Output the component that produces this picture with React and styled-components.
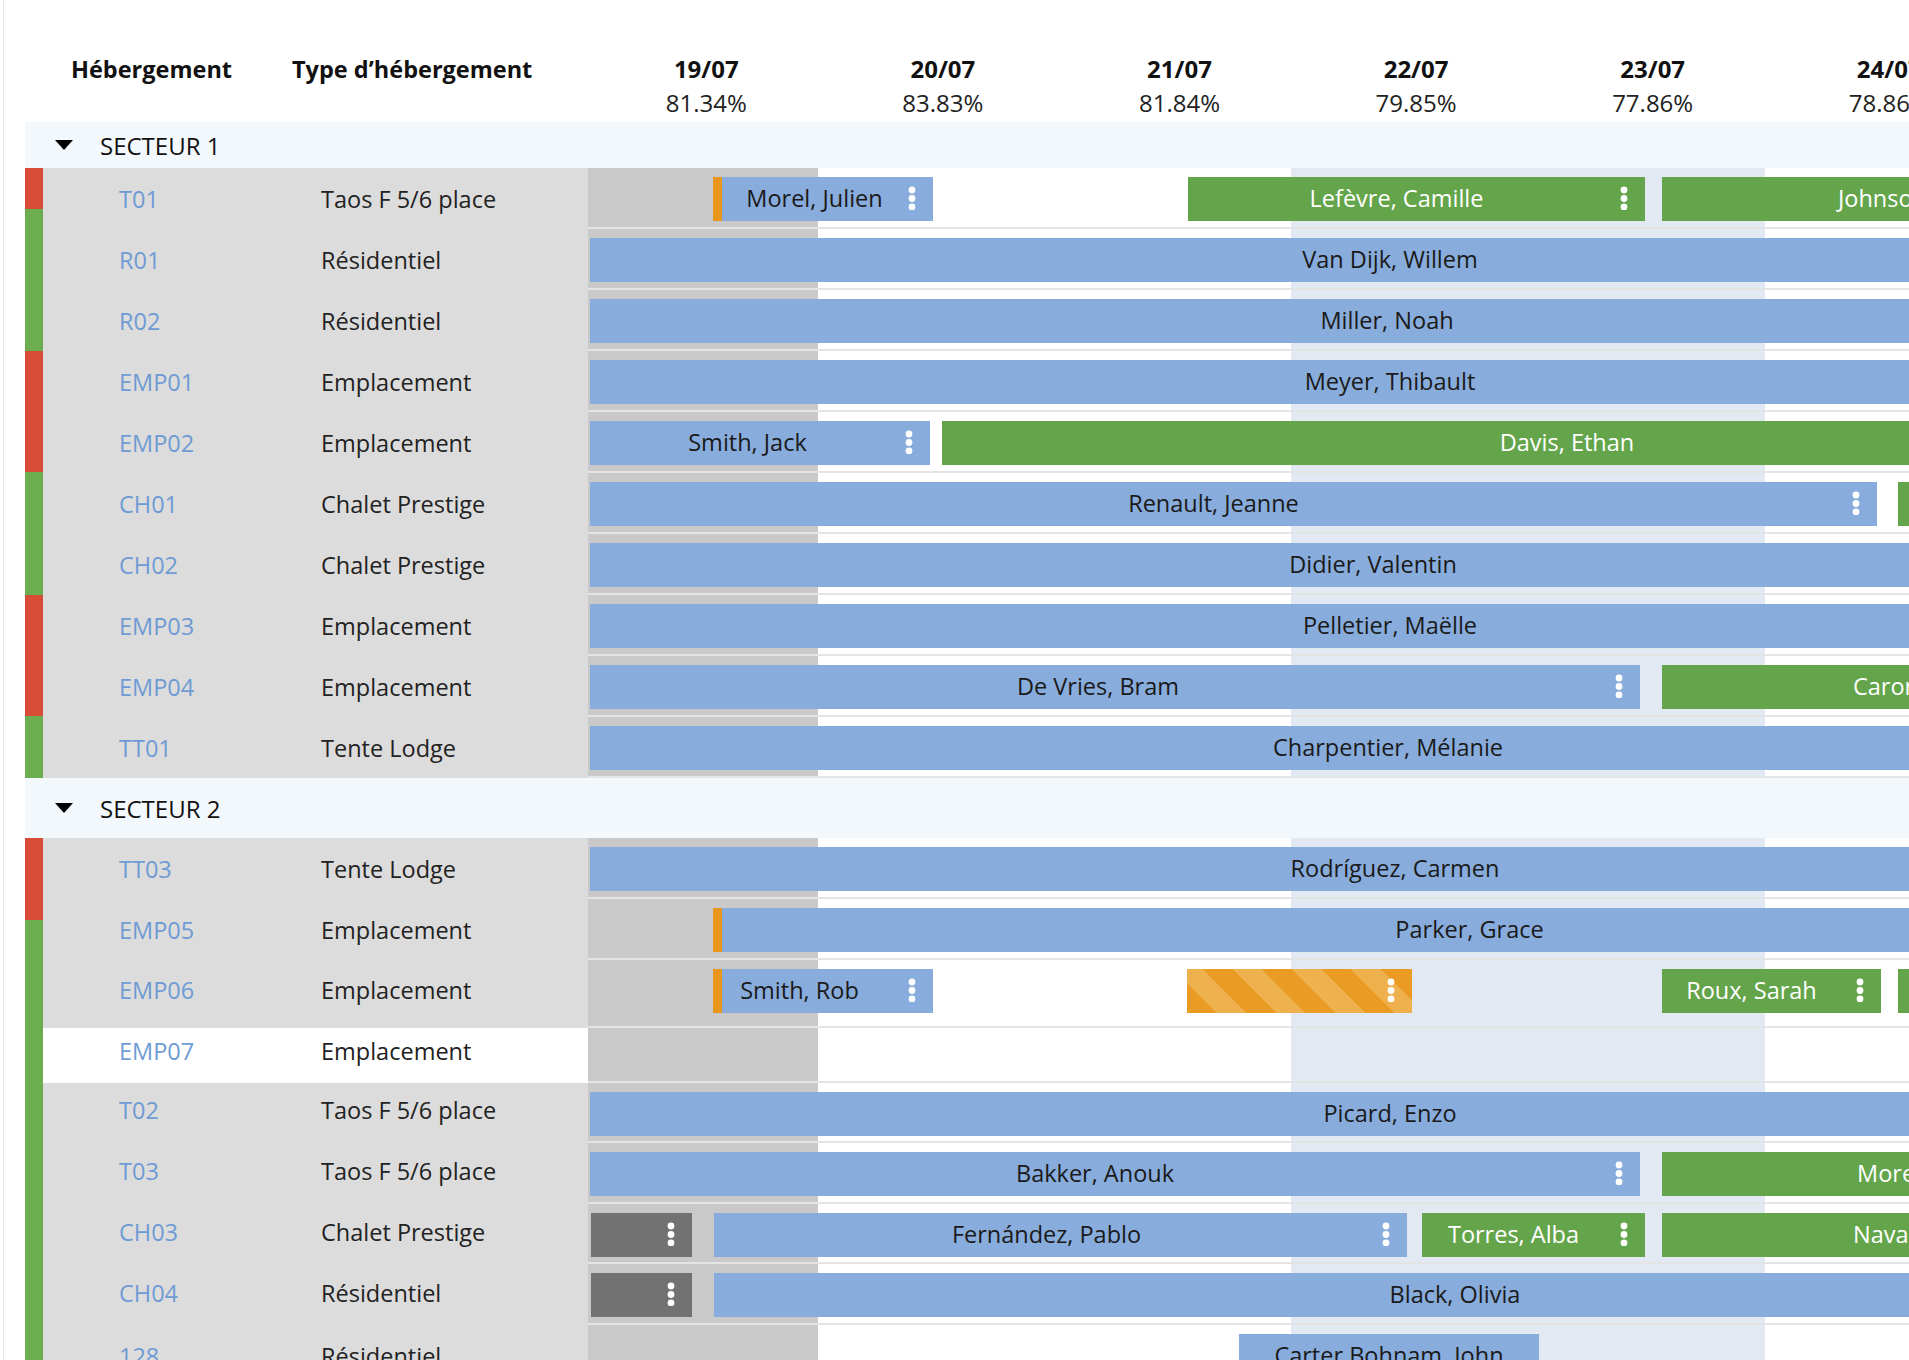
import React from 'react'
import styled, {createGlobalStyle, css} from 'styled-components'

const GlobalStyle = createGlobalStyle`
    html, body {
        margin: 0;
        padding: 0;
        overflow: hidden;
        background: #fff;
    }
    body {
        font-family: "Open Sans", "Liberation Sans", sans-serif;
        color: #1c1c1c;
    }
`

const DAYS = [
    {date: '19/07', rate: '81.34%'},
    {date: '20/07', rate: '83.83%'},
    {date: '21/07', rate: '81.84%'},
    {date: '22/07', rate: '79.85%'},
    {date: '23/07', rate: '77.86%'},
    {date: '24/07', rate: '78.86%'},
]

// bar positions are in px from the start of the timeline
const SECTIONS = [
    {
        name: 'SECTEUR 1',
        height: 46,
        strip: [
            ['red', 41],
            ['green', 142],
            ['red', 121],
            ['green', 123],
            ['red', 121],
            ['green', 62],
        ],
        rows: [
            {
                code: 'T01',
                type: 'Taos F 5/6 place',
                bars: [
                    {x: 125, w: 220, kind: 'blue', edge: true, label: 'Morel, Julien', menu: true, menuW: 26},
                    {x: 600, w: 457, kind: 'green', label: 'Lefèvre, Camille', menu: true},
                    {x: 1074, w: 400, kind: 'green', label: 'Johnson, Emma', pad: 176},
                ],
            },
            {code: 'R01', type: 'Résidentiel', bars: [{x: 2, w: 1600, kind: 'blue', label: 'Van Dijk, Willem'}]},
            {code: 'R02', type: 'Résidentiel', bars: [{x: 2, w: 1594, kind: 'blue', label: 'Miller, Noah'}]},
            {code: 'EMP01', type: 'Emplacement', bars: [{x: 2, w: 1600, kind: 'blue', label: 'Meyer, Thibault'}]},
            {
                code: 'EMP02',
                type: 'Emplacement',
                bars: [
                    {x: 2, w: 340, kind: 'blue', label: 'Smith, Jack', menu: true, menuW: 22},
                    {x: 354, w: 1250, kind: 'green', label: 'Davis, Ethan'},
                ],
            },
            {
                code: 'CH01',
                type: 'Chalet Prestige',
                bars: [
                    {x: 2, w: 1287, kind: 'blue', label: 'Renault, Jeanne', menu: true},
                    {x: 1310, w: 200, kind: 'green', label: ''},
                ],
            },
            {code: 'CH02', type: 'Chalet Prestige', bars: [{x: 2, w: 1566, kind: 'blue', label: 'Didier, Valentin'}]},
            {code: 'EMP03', type: 'Emplacement', bars: [{x: 2, w: 1600, kind: 'blue', label: 'Pelletier, Maëlle'}]},
            {
                code: 'EMP04',
                type: 'Emplacement',
                bars: [
                    {x: 2, w: 1050, kind: 'blue', label: 'De Vries, Bram', menu: true, menuW: 34},
                    {x: 1074, w: 400, kind: 'green', label: 'Caron, Louis', pad: 191},
                ],
            },
            {code: 'TT01', type: 'Tente Lodge', bars: [{x: 2, w: 1596, kind: 'blue', label: 'Charpentier, Mélanie'}]},
        ],
    },
    {
        name: 'SECTEUR 2',
        height: 60,
        strip: [
            ['red', 82],
            ['green', 600],
        ],
        rows: [
            {code: 'TT03', type: 'Tente Lodge', bars: [{x: 2, w: 1610, kind: 'blue', label: 'Rodríguez, Carmen'}]},
            {
                code: 'EMP05',
                type: 'Emplacement',
                bars: [{x: 125, w: 1504, kind: 'blue', edge: true, label: 'Parker, Grace'}],
            },
            {
                code: 'EMP06',
                type: 'Emplacement',
                height: 68,
                lift: 8,
                bars: [
                    {x: 125, w: 220, kind: 'blue', edge: true, label: 'Smith, Rob', menu: true, menuW: 56},
                    {x: 599, w: 225, kind: 'stripe', label: '', menu: true},
                    {x: 1074, w: 219, kind: 'green', label: 'Roux, Sarah', menu: true},
                    {x: 1310, w: 200, kind: 'green', label: ''},
                ],
            },
            {code: 'EMP07', type: 'Emplacement', height: 55, lift: 10, free: true, bars: []},
            {code: 'T02', type: 'Taos F 5/6 place', height: 60, lift: 6, bars: [{x: 2, w: 1600, kind: 'blue', label: 'Picard, Enzo'}]},
            {
                code: 'T03',
                type: 'Taos F 5/6 place',
                lift: 6,
                bars: [
                    {x: 2, w: 1050, kind: 'blue', label: 'Bakker, Anouk', menu: true},
                    {x: 1074, w: 400, kind: 'green', label: 'Moreau, Hugo', pad: 195},
                ],
            },
            {
                code: 'CH03',
                type: 'Chalet Prestige',
                height: 60,
                lift: 5,
                bars: [
                    {x: 3, w: 101, kind: 'dark', label: '', menu: true},
                    {x: 126, w: 693, kind: 'blue', label: 'Fernández, Pablo', menu: true, menuW: 28},
                    {x: 834, w: 223, kind: 'green', label: 'Torres, Alba', menu: true},
                    {x: 1074, w: 400, kind: 'green', label: 'Navarro, Lucia', pad: 191},
                ],
            },
            {
                code: 'CH04',
                type: 'Résidentiel',
                lift: 4,
                bars: [
                    {x: 3, w: 101, kind: 'dark', label: '', menu: true},
                    {x: 126, w: 1482, kind: 'blue', label: 'Black, Olivia'},
                ],
            },
            {code: '128', type: 'Résidentiel', bars: [{x: 651, w: 300, kind: 'blue', label: 'Carter Bohnam, John'}]},
        ],
    },
]

const Kebab = () => (
    <svg width="8" height="24" viewBox="0 0 8 24">
        <circle cx="4" cy="4" r="3.4" fill="#fff" />
        <circle cx="4" cy="12.5" r="3.4" fill="#fff" />
        <circle cx="4" cy="21" r="3.4" fill="#fff" />
    </svg>
)

const Booking = ({bar}) => (
    <Bar $kind={bar.kind} $edge={bar.edge} style={{left: bar.x, width: bar.w}}>
        <BarLabel $kind={bar.kind} $pad={bar.pad}>{bar.label}</BarLabel>
        {bar.menu && (
            <BarMenu $w={bar.menuW}>
                <Kebab />
            </BarMenu>
        )}
    </Bar>
)

const Section = ({section}) => (
    <>
        <SectionHeader $h={section.height}>
            <Caret />
            <SectionName>{section.name}</SectionName>
        </SectionHeader>
        <SectionBody>
            <Strip>
                {section.strip.map(([color, h], i) => (
                    <StripPart key={i} $color={color} style={{height: h}} />
                ))}
            </Strip>
            <Rows>
                {section.rows.map((row) => (
                    <Row key={row.code} $h={row.height ?? 61}>
                        <RowInfo $free={row.free} $lift={row.lift}>
                            <Code>{row.code}</Code>
                            <TypeName>{row.type}</TypeName>
                        </RowInfo>
                        <Track>
                            {row.bars.map((bar, i) => (
                                <Booking key={i} bar={bar} />
                            ))}
                        </Track>
                    </Row>
                ))}
            </Rows>
        </SectionBody>
    </>
)

const App = () => (
    <>
        <GlobalStyle />
        <Page>
            <Header>
                <HeaderLabels>
                    <HeadLabel $w={221}>Hébergement</HeadLabel>
                    <HeadLabel>Type d’hébergement</HeadLabel>
                </HeaderLabels>
                <DayHeads>
                    {DAYS.map((d) => (
                        <DayHead key={d.date}>
                            <DayDate>{d.date}</DayDate>
                            <DayRate>{d.rate}</DayRate>
                        </DayHead>
                    ))}
                </DayHeads>
            </Header>
            {SECTIONS.map((s) => (
                <Section key={s.name} section={s} />
            ))}
        </Page>
    </>
)

export default App

const Page = styled.div`
    margin-left: 3px;
    border-left: 1px solid #e6e6e6;
    padding-left: 21px;
    width: 1884px;
    min-height: 1360px;
    overflow: hidden;
`
const Header = styled.div`
    display: flex;
    height: 122px;
    background: #fff;
`
const HeaderLabels = styled.div`
    flex: 0 0 563px;
    display: flex;
    box-sizing: border-box;
    padding: 52px 0 0 46px;
`
const HeadLabel = styled.div`
    width: ${(p) => (p.$w ? `${p.$w}px` : 'auto')};
    font-size: 23.5px;
    font-weight: 700;
    line-height: 34px;
    color: #111;
    white-space: nowrap;
`
const DayHeads = styled.div`
    flex: 1;
    display: flex;
    overflow: hidden;
    padding-top: 52px;
`
const DayHead = styled.div`
    flex: 0 0 236.6px;
    text-align: center;
    line-height: 34px;
    white-space: nowrap;
`
const DayDate = styled.div`
    font-size: 24px;
    font-weight: 700;
    color: #111;
`
const DayRate = styled.div`
    font-size: 24px;
    color: #222;
`
const SectionHeader = styled.div`
    height: ${(p) => p.$h}px;
    display: flex;
    align-items: center;
    background: #f3f8fd;
    padding-left: 30px;
`
const Caret = styled.span`
    width: 0;
    height: 0;
    border-left: 9px solid transparent;
    border-right: 9px solid transparent;
    border-top: 10px solid #000;
    margin-right: 27px;
`
const SectionName = styled.span`
    font-size: 24px;
    color: #111;
`
const SectionBody = styled.div`
    display: flex;
`
const Strip = styled.div`
    flex: 0 0 18px;
    display: flex;
    flex-direction: column;
`
const StripPart = styled.div`
    flex-shrink: 0;
    background: ${(p) => (p.$color === 'red' ? '#d84c37' : '#6aae4f')};
`
const Rows = styled.div`
    flex: 1;
    display: flex;
    flex-direction: column;
`
const Row = styled.div`
    display: flex;
    height: ${(p) => p.$h}px;
    flex-shrink: 0;
`
const RowInfo = styled.div`
    flex: 0 0 545px;
    box-sizing: border-box;
    display: flex;
    align-items: center;
    padding-left: 76px;
    padding-bottom: ${(p) => p.$lift ?? 0}px;
    background: ${(p) => (p.$free ? '#fff' : '#dcdcdc')};
    font-size: 23.5px;
    white-space: nowrap;
`
const Code = styled.span`
    width: 202px;
    color: #6f9bd4;
`
const TypeName = styled.span`
    color: #222;
`
const Track = styled.div`
    flex: 1;
    position: relative;
    overflow: hidden;
    box-sizing: border-box;
    border-bottom: 2px solid #e4e4e4;
    background: linear-gradient(
        to right,
        #c9c9c9 0 230px,
        #fff 230px 703px,
        #e2e9f3 703px 1177px,
        #fff 1177px
    );
`
const barColors = {
    blue: css`
        background: #88acdb;
        color: #1a1a1a;
    `,
    green: css`
        background: #64a54b;
        color: #fff;
    `,
    dark: css`
        background: #727272;
        color: #fff;
    `,
    stripe: css`
        background: repeating-linear-gradient(45deg, #e99b24 0 21px, #eeb14d 21px 42px);
        color: #fff;
    `,
}
const Bar = styled.div`
    position: absolute;
    top: 9px;
    height: 44px;
    box-sizing: border-box;
    display: flex;
    align-items: center;
    padding-bottom: 2px;
    ${(p) => barColors[p.$kind]}
    ${(p) => p.$edge && 'border-left: 9px solid #e8961d;'}
`
const BarLabel = styled.span`
    flex: 1;
    min-width: 0;
    font-size: 23.5px;
    white-space: nowrap;
    overflow: hidden;
    text-align: ${(p) => (p.$pad ? 'left' : 'center')};
    padding-left: ${(p) => p.$pad ?? 0}px;
`
const BarMenu = styled.span`
    flex: 0 0 ${(p) => p.$w ?? 40}px;
    display: flex;
    justify-content: flex-end;
    padding-right: 17px;
    box-sizing: border-box;
    align-items: center;
`
